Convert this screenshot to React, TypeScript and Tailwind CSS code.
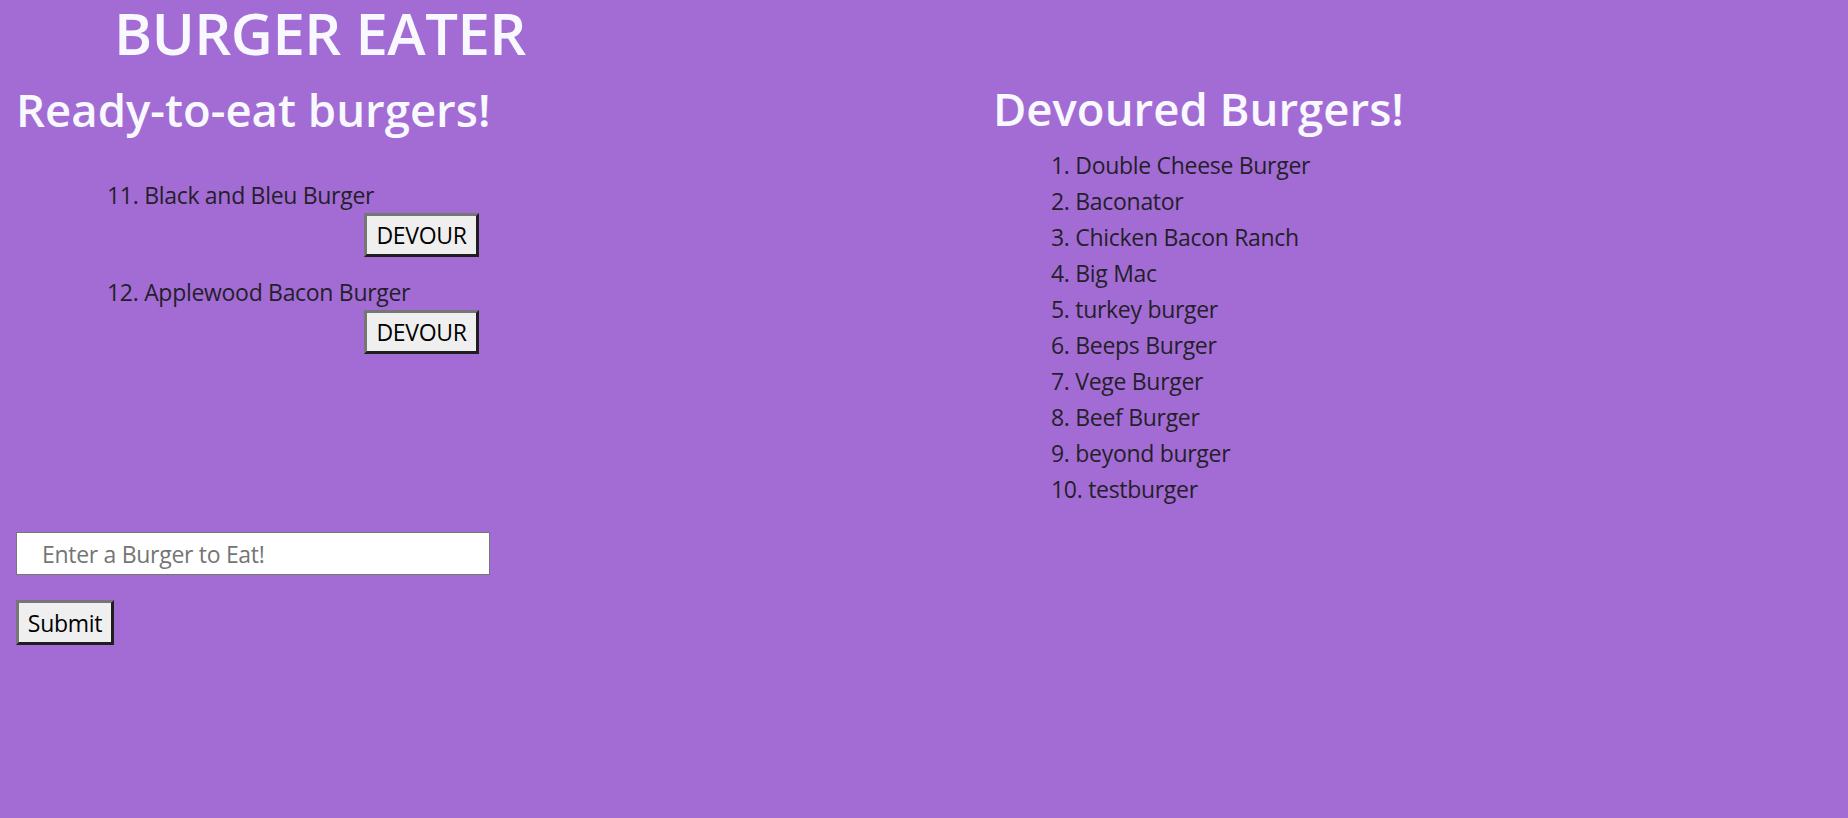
import React from 'react';

const readyBurgers = [
  { id: 11, name: 'Black and Bleu Burger' },
  { id: 12, name: 'Applewood Bacon Burger' },
];

const devoured = [
  'Double Cheese Burger',
  'Baconator',
  'Chicken Bacon Ranch',
  'Big Mac',
  'turkey burger',
  'Beeps Burger',
  'Vege Burger',
  'Beef Burger',
  'beyond burger',
  'testburger',
];

const btn =
  'bg-[#efefef] text-black text-[23px] tracking-[-0.3px] leading-[38px] border-[3px] border-t-[#767676] border-l-[#767676] border-r-[#1e1e1e] border-b-[#1e1e1e]';

export default function App() {
  return (
    <div className="min-h-screen bg-[#a36cd4] font-['Open_Sans',sans-serif] text-[#241f2b]">
      {/* header */}
      <h1 className="pl-[114px] pt-[2px] text-[58px] leading-[62px] font-semibold text-[#f8f8ff] tracking-[-0.5px]">
        BURGER EATER
      </h1>

      <div className="flex items-start">
        {/* ready to eat */}
        <div className="w-[978px] pl-[16px]">
          <h2 className="mt-[15px] text-[45.5px] leading-[60px] font-semibold text-[#f8f8ff]">
            Ready-to-eat burgers!
          </h2>
          <ul className="mt-[39px] w-[463px]">
            {readyBurgers.map(b => (
              <li key={b.id} className="mb-[18px] flex flex-col">
                <span className="pl-[91px] text-[23px] tracking-[-0.3px] leading-[35px]">
                  {b.id}. {b.name}
                </span>
                <div className="flex justify-end">
                  <button className={`${btn} w-[115px] h-[44px]`}>DEVOUR</button>
                </div>
              </li>
            ))}
          </ul>
          <form className="mt-[178px] flex flex-col items-start">
            <input
              type="text"
              placeholder="Enter a Burger to Eat!"
              className="w-[474px] h-[43px] bg-white border border-[#767676] pl-[25px] text-[23px] tracking-[-0.3px] placeholder:text-[#757575] outline-none"
            />
            <button type="submit" className={`${btn} mt-[25px] w-[98px] h-[45px]`}>
              Submit
            </button>
          </form>
        </div>

        {/* devoured */}
        <div className="pl-[15px]">
          <h2 className="mt-[14px] text-[45.5px] leading-[60px] font-semibold text-[#f8f8ff]">
            Devoured Burgers!
          </h2>
          <ol className="mt-[9px] pl-[58px]">
            {devoured.map((name, i) => (
              <li key={name} className="text-[23px] tracking-[-0.3px] leading-[36px]">
                {i + 1}. {name}
              </li>
            ))}
          </ol>
        </div>
      </div>
    </div>
  );
}
